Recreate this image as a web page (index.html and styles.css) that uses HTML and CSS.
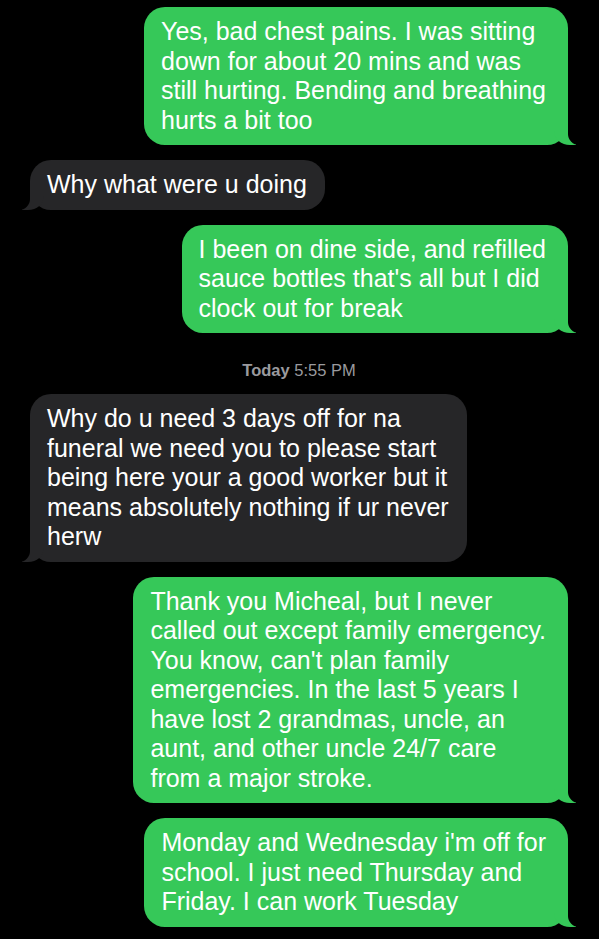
FILE: index.html
```html
<!DOCTYPE html>
<html lang="en">
<head>
    <meta charset="UTF-8">
    <meta name="viewport" content="width=device-width, initial-scale=1.0">
    <title>Messages</title>
    <link rel="stylesheet" href="styles.css">
</head>
<body>
    <div class="thread">
        <div class="bubble sent">
            Yes, bad chest pains. I was sitting<br>
            down for about 20 mins and was<br>
            still hurting. Bending and breathing<br>
            hurts a bit too
        </div>

        <div class="bubble received">
            Why what were u doing
        </div>

        <div class="bubble sent">
            I been on dine side, and refilled<br>
            sauce bottles that's all but I did<br>
            clock out for break
        </div>

        <div class="timestamp"><b>Today</b> 5:55 PM</div>

        <div class="bubble received">
            Why do u need 3 days off for na<br>
            funeral we need you to please start<br>
            being here your a good worker but it<br>
            means absolutely nothing if ur never<br>
            herw
        </div>

        <div class="bubble sent">
            Thank you Micheal, but I never<br>
            called out except family emergency.<br>
            You know, can't plan family<br>
            emergencies. In the last 5 years I<br>
            have lost 2 grandmas, uncle, an<br>
            aunt, and other uncle 24/7 care<br>
            from a major stroke.
        </div>

        <div class="bubble sent">
            Monday and Wednesday i'm off for<br>
            school. I just need Thursday and<br>
            Friday. I can work Tuesday
        </div>
    </div>
</body>
</html>
```

FILE: styles.css
```css
body {
    margin: 0;
    background-color: #000;
    font-family: "Liberation Sans", Arial, sans-serif;
    color: #fff;
}
.thread {
    display: flex;
    flex-direction: column;
    gap: 15px;
    padding: 7px 31px 20px 30px;
}
.bubble {
    position: relative;
    font-size: 25px;
    line-height: 29.5px;
    padding: 10px 22px 10px 17px;
    border-radius: 21px;
    white-space: nowrap;
}
.sent {
    align-self: flex-end;
    background-color: #36c859;
}
.received {
    align-self: flex-start;
    background-color: #262628;
    padding-right: 18px;
}
/* tails */
.bubble::before,
.bubble::after {
    content: "";
    position: absolute;
    bottom: 0;
    height: 22px;
}
.sent::before {
    right: -8px;
    width: 22px;
    background-color: #36c859;
    border-bottom-left-radius: 16px 14px;
}
.sent::after {
    right: -26px;
    width: 26px;
    background-color: #000;
    border-bottom-left-radius: 11px;
}
.received::before {
    left: -8px;
    width: 22px;
    background-color: #262628;
    border-bottom-right-radius: 16px 14px;
}
.received::after {
    left: -26px;
    width: 26px;
    background-color: #000;
    border-bottom-right-radius: 11px;
}
.timestamp {
    align-self: center;
    font-size: 16.5px;
    line-height: 18px;
    padding-top: 13px;
    color: #9a9a9e;
}
.timestamp b {
    font-weight: bold;
}
```
